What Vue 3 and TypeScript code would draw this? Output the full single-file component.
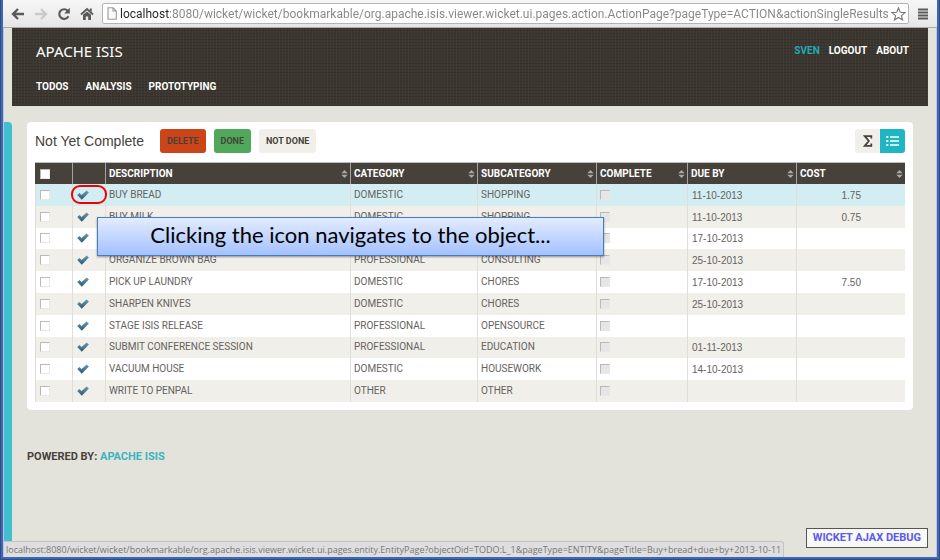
<script setup lang="ts">
import { ref } from 'vue'

interface Todo {
  description: string
  category: string
  subcategory: string
  dueBy: string
  cost: string
}

const url = ref(
  'localhost:8080/wicket/wicket/bookmarkable/org.apache.isis.viewer.wicket.ui.pages.action.ActionPage?pageType=ACTION&actionSingleResults'
)
const status =
  'localhost:8080/wicket/wicket/bookmarkable/org.apache.isis.viewer.wicket.ui.pages.entity.EntityPage?objectOid=TODO:L_1&pageType=ENTITY&pageTitle=Buy+bread+due+by+2013-10-11'

const columns = [
  { key: 'description', label: 'Description' },
  { key: 'category', label: 'Category' },
  { key: 'subcategory', label: 'Subcategory' },
  { key: 'complete', label: 'Complete' },
  { key: 'due', label: 'Due by' },
  { key: 'cost', label: 'Cost' }
]

const todos: Todo[] = [
  { description: 'Buy bread', category: 'Domestic', subcategory: 'Shopping', dueBy: '11-10-2013', cost: '1.75' },
  { description: 'Buy milk', category: 'Domestic', subcategory: 'Shopping', dueBy: '11-10-2013', cost: '0.75' },
  { description: '', category: '', subcategory: '', dueBy: '17-10-2013', cost: '' },
  { description: 'Organize brown bag', category: 'Professional', subcategory: 'Consulting', dueBy: '25-10-2013', cost: '' },
  { description: 'Pick up laundry', category: 'Domestic', subcategory: 'Chores', dueBy: '17-10-2013', cost: '7.50' },
  { description: 'Sharpen knives', category: 'Domestic', subcategory: 'Chores', dueBy: '25-10-2013', cost: '' },
  { description: 'Stage Isis release', category: 'Professional', subcategory: 'Opensource', dueBy: '', cost: '' },
  { description: 'Submit conference session', category: 'Professional', subcategory: 'Education', dueBy: '01-11-2013', cost: '' },
  { description: 'Vacuum house', category: 'Domestic', subcategory: 'Housework', dueBy: '14-10-2013', cost: '' },
  { description: 'Write to penpal', category: 'Other', subcategory: 'Other', dueBy: '', cost: '' }
]
</script>

<template>
  <div class="window">
    <div class="toolbar">
      <button class="tool" type="button" aria-label="Back">
        <svg width="14" height="14" viewBox="0 0 14 14"><path d="M7 2 L2 7 L7 12 M2.5 7 H13" fill="none" stroke="#5a5a5a" stroke-width="2.4" /></svg>
      </button>
      <button class="tool" type="button" aria-label="Forward">
        <svg width="14" height="14" viewBox="0 0 14 14"><path d="M7 2 L12 7 L7 12 M11.5 7 H1" fill="none" stroke="#cbcbcb" stroke-width="2.4" /></svg>
      </button>
      <button class="tool" type="button" aria-label="Reload">
        <svg width="14" height="14" viewBox="0 0 14 14">
          <path d="M10.8 4 A4.8 4.8 0 1 0 11.4 9.2" fill="none" stroke="#5a5a5a" stroke-width="2.2" />
          <path d="M12.8 0.8 V6.4 H7.2 Z" fill="#5a5a5a" />
        </svg>
      </button>
      <button class="tool" type="button" aria-label="Home">
        <svg width="14" height="14" viewBox="0 0 14 14">
          <path d="M1 7.5 L7 2 L13 7.5" fill="none" stroke="#5a5a5a" stroke-width="1.8" />
          <path d="M9.8 1.5 H11.8 V5 L9.8 3.2 Z M3 7.8 L7 4.4 L11 7.8 V13 H8.2 V9.5 H5.8 V13 H3 Z" fill="#5a5a5a" />
        </svg>
      </button>
      <div class="address">
        <svg width="10" height="13" viewBox="0 0 10 13"><path d="M1 0.7 H6 L9.3 4 V12.3 H1 Z M6 0.7 V4 H9.3" fill="#fafafa" stroke="#9a9a9a" stroke-width="1.1" /></svg>
        <input v-model="url" class="url" type="text" aria-label="Address" spellcheck="false" />
        <button class="star" type="button" aria-label="Bookmark this page">
          <svg width="15" height="14" viewBox="0 0 15 14"><path d="M7.5 1 L9.3 5.3 L14 5.6 L10.4 8.6 L11.6 13 L7.5 10.5 L3.4 13 L4.6 8.6 L1 5.6 L5.7 5.3 Z" fill="#fff" stroke="#777" stroke-width="1.1" /></svg>
        </button>
      </div>
      <button class="tool menu" type="button" aria-label="Menu">
        <svg width="10" height="12" viewBox="0 0 10 12"><path d="M0 1.5 H10 M0 4.5 H10 M0 7.5 H10 M0 10.5 H10" stroke="#5a5a5a" stroke-width="2" /></svg>
      </button>
    </div>

    <div class="page">
      <header class="banner">
        <div class="banner-top">
          <a class="brand" href="#">APACHE ISIS</a>
          <nav class="links" aria-label="Account">
            <a class="user" href="#">SVEN</a>
            <a href="#">LOGOUT</a>
            <a href="#">ABOUT</a>
          </nav>
        </div>
        <nav class="services" aria-label="Services">
          <a href="#">TODOS</a>
          <a href="#">ANALYSIS</a>
          <a href="#">PROTOTYPING</a>
        </nav>
      </header>

      <div class="body">
        <div class="drawer"></div>
        <main class="content">
          <section class="panel">
            <div class="panel-head">
              <h1>Not Yet Complete</h1>
              <button class="action delete" type="button">DELETE</button>
              <button class="action done" type="button">DONE</button>
              <button class="action" type="button">NOT DONE</button>
              <div class="views">
                <button type="button" class="view" aria-label="Summary">
                  <svg width="10" height="12" viewBox="0 0 10 12"><path d="M8.3 3.6 V1.2 H1.8 L5.8 6 L1.8 10.8 H8.3 V8.4" fill="none" stroke="#46423b" stroke-width="1.8" /></svg>
                </button>
                <button type="button" class="view active" aria-label="Table">
                  <svg width="13" height="12" viewBox="0 0 13 12">
                    <path d="M4 2 H13 M4 6 H13 M4 10 H13" stroke="#fff" stroke-width="1.5" />
                    <path d="M0.3 2 H2.3 M0.3 6 H2.3 M0.3 10 H2.3" stroke="#fff" stroke-width="2" />
                  </svg>
                </button>
              </div>
            </div>

            <table>
              <colgroup>
                <col class="c-select" />
                <col class="c-icon" />
                <col v-for="c in columns" :key="c.key" :class="'c-' + c.key" />
              </colgroup>
              <thead>
                <tr>
                  <th><input type="checkbox" aria-label="Select all" /></th>
                  <th></th>
                  <th v-for="c in columns" :key="c.key" scope="col">
                    <div class="th">
                      <span>{{ c.label }}</span>
                      <svg width="7" height="8" viewBox="0 0 7 8"><path d="M0.3 3.3 L3.5 0 L6.7 3.3 Z M0.3 4.7 L3.5 8 L6.7 4.7 Z" fill="#aaa8a3" /></svg>
                    </div>
                  </th>
                </tr>
              </thead>
              <tbody>
                <tr v-for="(t, i) in todos" :key="i" :class="{ hover: i === 0 }">
                  <td><input type="checkbox" :aria-label="'Select row ' + (i + 1)" /></td>
                  <td>
                    <a class="object" :class="{ marked: i === 0 }" href="#" :aria-label="'Open row ' + (i + 1)">
                      <svg width="12" height="10" viewBox="0 0 12 10">
                        <defs>
                          <linearGradient :id="'tick' + i" x1="0" y1="0" x2="0" y2="1">
                            <stop offset="0" stop-color="#6d9db8" />
                            <stop offset="1" stop-color="#2c5670" />
                          </linearGradient>
                        </defs>
                        <path d="M0.2 5 L2.4 3 L4.6 5 L9.6 0.4 L11.9 2.4 L4.8 9.8 Z" :fill="'url(#tick' + i + ')'" />
                      </svg>
                    </a>
                  </td>
                  <td>{{ t.description }}</td>
                  <td>{{ t.category }}</td>
                  <td>{{ t.subcategory }}</td>
                  <td><input type="checkbox" disabled :aria-label="'Row ' + (i + 1) + ' complete'" /></td>
                  <td class="date">{{ t.dueBy }}</td>
                  <td class="cost">{{ t.cost }}</td>
                </tr>
              </tbody>
            </table>
            <div class="callout">Clicking the icon navigates to the object...</div>
          </section>

          <footer>POWERED BY: <a href="#">APACHE ISIS</a></footer>
        </main>
      </div>
    </div>

    <div class="status">{{ status }}</div>
    <a class="debug" href="#">WICKET AJAX DEBUG</a>
  </div>
</template>

<style>
body {
  margin: 0;
}
</style>

<style scoped>
* {
  box-sizing: border-box;
}
a {
  text-decoration: none;
  color: inherit;
}
button {
  border: 0;
  padding: 0;
  background: none;
  font: inherit;
}
svg {
  display: block;
}
.window {
  position: relative;
  display: flex;
  flex-direction: column;
  min-height: 100vh;
  padding: 0 2px 2px;
  border: solid #3c4a72;
  border-width: 0 1px 1px;
  background: #3a68bf;
  font-family: "Liberation Sans", Arial, sans-serif;
  color: #46423b;
}
.toolbar {
  display: flex;
  align-items: center;
  gap: 8px;
  height: 28px;
  padding: 0 8px 0 7px;
  background: linear-gradient(#f7f7f7, #e6e6e6);
  border-bottom: 1px solid #a9a9a9;
}
.tool {
  display: grid;
  place-items: center;
  width: 15px;
  height: 20px;
}
.menu {
  width: 12px;
}
.address {
  flex: 1;
  display: flex;
  align-items: center;
  gap: 3px;
  min-width: 0;
  height: 21px;
  padding: 0 2px 0 4px;
  border: 1px solid #b4b4b4;
  border-radius: 2px;
  background: #fff;
}
.url {
  flex: 1;
  min-width: 0;
  height: 18px;
  border: 0;
  padding: 0;
  outline: 0;
  font-family: Roboto, sans-serif;
  font-size: 12px;
  color: transparent;
  background: linear-gradient(90deg, #222 49px, #858585 49px);
  background-clip: text;
  -webkit-background-clip: text;
}
.page {
  flex: 1;
  display: flex;
  flex-direction: column;
  padding: 0 9px 0 1px;
  background: #e3e3db;
  box-shadow: inset 1px 0 #b9c6dc, inset -1px 0 #b9c6dc;
}
.banner {
  height: 78px;
  margin-left: 8px;
  padding: 14px 19px 0 24px;
  background:
    repeating-linear-gradient(0deg, rgba(0, 0, 0, 0.1) 0 1px, transparent 1px 3px),
    repeating-linear-gradient(90deg, rgba(255, 255, 255, 0.03) 0 1px, transparent 1px 3px),
    #3b3730;
  color: #fff;
}
.banner-top {
  display: flex;
  justify-content: space-between;
  align-items: center;
  height: 18px;
}
.brand {
  font-family: "Noto Sans", sans-serif;
  font-size: 15px;
}
.links,
.services {
  display: flex;
  font-family: Roboto, sans-serif;
  font-size: 10px;
  font-weight: 700;
  line-height: 12px;
}
.links {
  gap: 9px;
}
.services {
  gap: 17px;
  margin-top: 21px;
}
.user {
  color: #22a9b8;
}
.body {
  flex: 1;
  display: flex;
  gap: 15px;
  padding-top: 16px;
}
.drawer {
  width: 8px;
  border-radius: 0 4px 0 0;
  background: #40c0ce;
}
.content {
  flex: 1;
  min-width: 0;
  padding-right: 15px;
}
.panel {
  position: relative;
  padding: 7px 8px 8px;
  border-radius: 4px;
  background: #fff;
}
.panel-head {
  display: flex;
  align-items: center;
  gap: 8px;
  margin-bottom: 9px;
}
h1 {
  margin: 0 8px 0 0;
  font-size: 14px;
  font-weight: 400;
  line-height: 24px;
}
.action {
  height: 24px;
  padding: 0 7px;
  border-radius: 3px;
  background: #f0efea;
  font-family: Roboto, sans-serif;
  font-size: 9px;
  font-weight: 700;
  color: #46423b;
}
.delete {
  background: #cb4519;
}
.done {
  background: #50a85b;
}
.views {
  display: flex;
  margin-left: auto;
  border-radius: 3px;
  overflow: hidden;
}
.view {
  display: grid;
  place-items: center;
  width: 25px;
  height: 24px;
  background: #f0efea;
}
.active {
  background: #20b5c3;
}
table {
  width: 100%;
  height: 240px;
  table-layout: fixed;
  border-collapse: separate;
  border-spacing: 0;
  border-top: 1px solid #bdbbb7;
  font-family: Roboto, sans-serif;
  font-size: 10px;
  text-transform: uppercase;
}
.c-select {
  width: 37px;
}
.c-icon {
  width: 33px;
}
.c-category {
  width: 127px;
}
.c-subcategory {
  width: 119px;
}
.c-complete {
  width: 91px;
}
.c-due {
  width: 109px;
}
.c-cost {
  width: 109px;
}
th {
  height: 21px;
  padding: 0 2px 0 3px;
  border-left: 1px solid #a5a39f;
  background: #46423b;
  line-height: 12px;
  text-align: left;
  color: #fff;
}
.th {
  display: flex;
  justify-content: space-between;
  align-items: center;
}
td {
  padding: 0 3px;
  border-left: 1px solid #dfdedb;
  line-height: 12px;
  white-space: nowrap;
  color: #66625d;
}
th:first-child,
td:first-child {
  padding-left: 4px;
}
th:first-child {
  border-left-color: #46423b;
}
tbody tr:nth-child(even) {
  background: #f0efea;
}
tbody .hover {
  background: #d2eef2;
}
.date,
.cost {
  padding-top: 2px;
  font-family: "Liberation Sans", Arial, sans-serif;
}
td.date {
  padding-left: 4px;
}
td.cost {
  padding-right: 44px;
  text-align: right;
}
input[type="checkbox"] {
  appearance: none;
  display: block;
  width: 10px;
  height: 10px;
  margin: 0;
  border: 1px solid;
  border-color: #b9b9b9 #e8e8e8 #e8e8e8 #b9b9b9;
  background: #fff;
}
input[type="checkbox"]:disabled {
  background: #e6e6e6;
}
.object {
  display: flex;
  align-items: center;
  height: 19px;
  padding-left: 1px;
}
.marked {
  position: relative;
}
.marked::after {
  content: "";
  position: absolute;
  inset: 0 -5px;
  border: 2px solid #f00000;
  border-radius: 9px;
}
.callout {
  position: absolute;
  left: 70px;
  top: 95px;
  width: 507px;
  height: 39px;
  border: 1px solid #4a7ebb;
  background: linear-gradient(#e3ecff, #a3c1ff);
  box-shadow: 0 1px 2px rgba(0, 0, 0, 0.4);
  font-family: Lato, sans-serif;
  font-size: 22px;
  line-height: 34px;
  text-align: center;
  white-space: nowrap;
  color: #000;
}
footer {
  margin-top: 40px;
  font-family: Roboto, sans-serif;
  font-size: 11px;
  font-weight: 700;
  line-height: 14px;
}
footer a {
  color: #3bb4c1;
}
.status {
  position: absolute;
  left: 3px;
  bottom: 2px;
  height: 16px;
  padding: 0 2px;
  border-top: 1px solid #c4c4c0;
  border-right: 1px solid #c4c4c0;
  border-radius: 0 3px 0 0;
  background: #dededf;
  font-family: "Open Sans", sans-serif;
  font-size: 9px;
  line-height: 15px;
  white-space: nowrap;
  color: #777;
}
.debug {
  position: absolute;
  right: 11px;
  bottom: 11px;
  padding: 0 6px;
  border: 1px solid #55565a;
  background: #f8f8f5;
  font-family: Roboto, sans-serif;
  font-size: 11px;
  font-weight: 700;
  line-height: 18px;
  color: #5a5af0;
}
</style>
